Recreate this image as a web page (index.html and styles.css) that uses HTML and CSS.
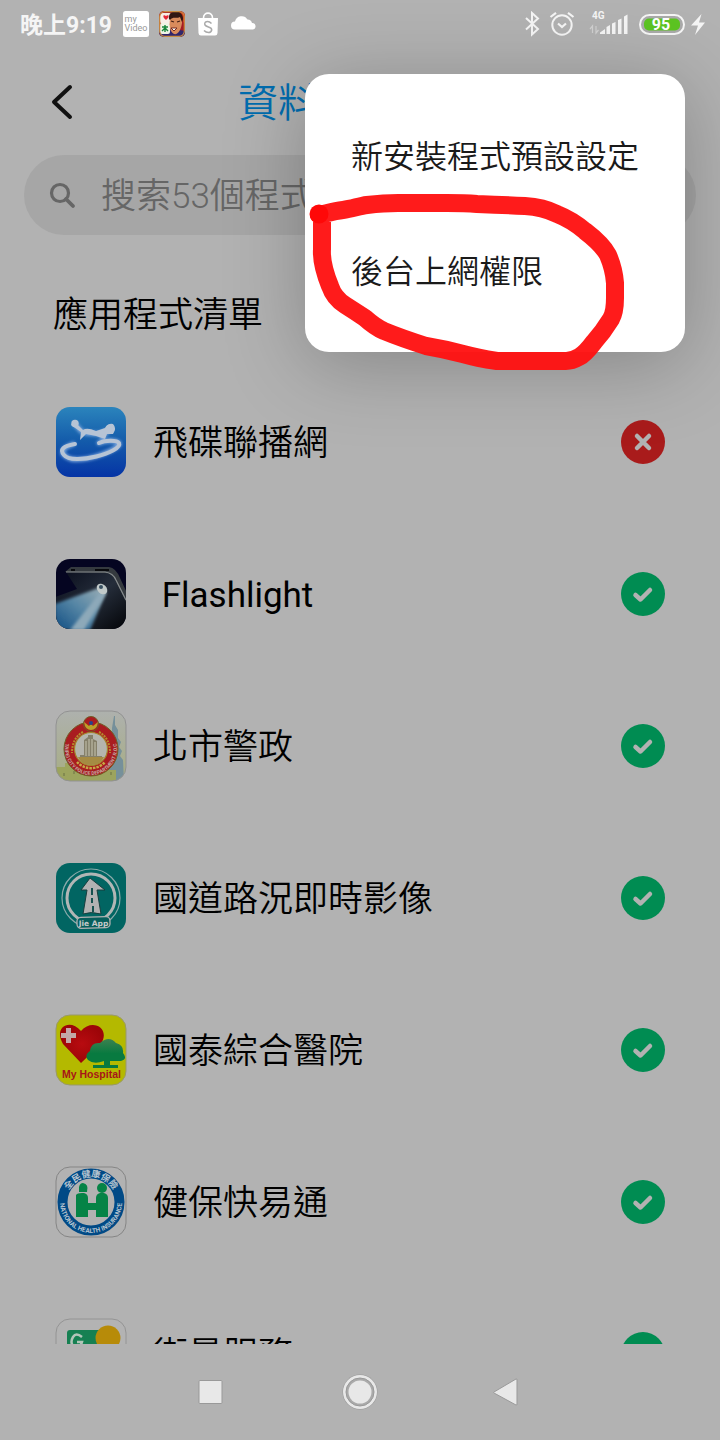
FILE: index.html
```html
<!DOCTYPE html>
<html lang="zh-Hant">
<head>
<meta charset="utf-8">
<meta name="viewport" content="width=device-width, initial-scale=1">
<title>應用程式清單</title>
<link rel="stylesheet" href="styles.css">
</head>
<body>
<svg width="0" height="0" class="sprite" aria-hidden="true">
  <defs>
    <symbol id="allowed" viewBox="0 0 44 44"><circle cx="22" cy="22" r="22" fill="#008c52"/><path d="M14.500 23L19.500 27.500L29 18" fill="none" stroke="#b2b2b2" stroke-width="4.500" stroke-linecap="round" stroke-linejoin="round"/></symbol>
    <symbol id="blocked" viewBox="0 0 44 44"><circle cx="22" cy="22" r="22" fill="#a91b1b"/><path d="M16 16L28 28M28 16L16 28" stroke="#b2b2b2" stroke-width="4.500" stroke-linecap="round"/></symbol>
  </defs>
</svg>
<div class="screen">
  <div class="statusbar">
    <span class="clock">晚上9:19</span>
    <div class="notices">
      <svg width="26" height="26" viewBox="0 0 26 26"><rect width="26" height="26" rx="2.500" fill="#fff"/><text x="1.500" y="11" class="tiny" font-size="9" fill="#999">my</text><text x="1.500" y="20" class="tiny" font-size="9" fill="#999">Video</text></svg>
      <svg width="26" height="26" viewBox="0 0 26 26"><defs><clipPath id="gc"><rect width="26" height="26" rx="5"/></clipPath></defs><g clip-path="url(#gc)"><rect width="26" height="26" fill="#a51c23"/><path d="M0 18L10 17L26 20V26H0Z" fill="#32266b"/><path d="M18 0L26 2V13L22 8Z" fill="#d83a21"/><rect x="1" y="2" width="12" height="11" rx="3" fill="#f6eee7"/><path d="M7 9C3 6 4 3 7 5C10 3 11 6 7 9Z" fill="#e42836"/><rect x="1" y="12" width="10" height="11" rx="2" fill="#eef3e5"/><path d="M3 16H9M6 14V21M3 20L6 17L9 20" stroke="#16863b" stroke-width="1.400" fill="none"/><path d="M11 8C11 1 24 2 23 12C22 19 19 24 15 23C11 21 10 15 11 8Z" fill="#d98b5c"/><path d="M10 8C9 1 15 0 20 1C24 3 25 8 23 11L21 6C17 8 14 5 11 9Z" fill="#321713"/><path d="M12 10L15 11M18 11L21 10" stroke="#432015" stroke-width="1.300"/><path d="M12 17L18 17L15 20Z" fill="#fff" stroke="#752b20"/></g><rect x=".700" y=".700" width="24.600" height="24.600" rx="5" fill="none" stroke="#c88d42" stroke-width="1.200"/></svg>
      <svg width="26" height="26" viewBox="0 0 26 26"><path d="M3 7H23L22.500 22Q22.400 24.500 20 24.500H6Q3.600 24.500 3.500 22Z" fill="#fff"/><path d="M8.500 7C8.500 .500 17.500 .500 17.500 7" fill="none" stroke="#fff" stroke-width="1.600"/><path d="M16.500 12.500C13 9 8.500 11 10 14C11.500 16.500 17.200 15.500 16.700 19C16 22.500 11.500 22 9 19.500" fill="none" stroke="#aaa" stroke-width="1.500"/></svg>
      <svg width="26" height="26" viewBox="0 0 26 26"><path d="M4 18.500A4 4 0 0 1 4 10.500A6.800 6.800 0 0 1 16.500 8.500A4.500 4.500 0 0 1 21 12A3.300 3.300 0 0 1 22 18.500Z" fill="#fff"/></svg>
    </div>
    <div class="signals">
      <svg width="21" height="26" viewBox="0 0 21 26"><path d="M4 7L16 18L10 23.500V2L16 7.500L4 18.500" fill="none" stroke="#f5f5f5" stroke-width="2"/></svg>
      <svg width="34" height="26" viewBox="0 0 34 26"><circle cx="13" cy="14" r="9.700" fill="none" stroke="#f5f5f5" stroke-width="2"/><path d="M1.500 6L7 1.800M19 1.800L24.500 6M9 12.500L13 16L17 12.500" fill="none" stroke="#f5f5f5" stroke-width="2.200"/></svg>
      <svg width="44" height="26" viewBox="0 0 44 26"><text x="3" y="8" class="tiny strong" font-size="10" fill="#f5f5f5">4G</text><path d="M3.500 22V15L1 18M7 15V22L9.500 19" fill="none" stroke="#d1d1d1" stroke-width="1.200"/><path d="M11 23V21.500L16 18V23ZM17.500 23V16L21 14V23ZM23 23V12.500L26.500 11V23ZM29 23V9L32.500 7.500V23ZM35 23V5.500L38.500 3.500V23Z" fill="#f5f5f5"/></svg>
      <svg width="46" height="26" viewBox="0 0 46 26"><rect x="1" y="4" width="44" height="19" rx="9.500" fill="#aaa" stroke="#f5f5f5" stroke-width="2"/><rect x="5" y="7.500" width="36" height="12" rx="5" fill="#5cc422"/><text x="22" y="19" text-anchor="middle" class="tiny strong" font-size="16" fill="#fff">95</text></svg>
      <svg width="16" height="26" viewBox="0 0 16 26"><path d="M10.500 3L0 14.500L7 14.500L4 24L14 11.500L8 11.500Z" fill="#f5f5f5"/></svg>
    </div>
  </div>

  <header class="header">
    <button class="back" aria-label="返回"><svg width="24" height="36" viewBox="0 0 24 36"><path d="M20 3L4 18L20 33" fill="none" stroke="#111" stroke-width="4" stroke-linecap="round" stroke-linejoin="round"/></svg></button>
    <h1 class="title">資料</h1>
  </header>

  <label class="search">
    <svg width="28" height="28" viewBox="0 0 28 28"><circle cx="12" cy="12" r="8.500" fill="none" stroke="#666" stroke-width="3.200"/><path d="M18 18L25 25" stroke="#666" stroke-width="3.800" stroke-linecap="round"/></svg>
    <input type="search" placeholder="搜索53個程式" aria-label="搜索程式">
  </label>

  <h2 class="section">應用程式清單</h2>

  <ul class="apps">
    <li class="app">
      <svg class="logo" viewBox="0 0 72 72"><defs><linearGradient id="sky" x2="0" y2="1"><stop stop-color="#2b84bc"/><stop offset=".5" stop-color="#135aaa"/><stop offset="1" stop-color="#0534a5"/></linearGradient><filter id="glow" x="-.2" y="-.3" width="1.400" height="1.600"><feGaussianBlur stdDeviation="1.800"/></filter></defs><rect x="1" y="1" width="70" height="70" rx="14" fill="url(#sky)"/><g fill="none" stroke="#7da7dd" stroke-width="5" stroke-linecap="round" filter="url(#glow)"><path d="M20 18L26 25L31 27L44 28L54 24L47 31M18 38C7 42 3 48 16 53C34 56 67 42 64 37C60 34 50 34 44 37"/></g><path d="M19 15L28 24Q32 21 41 25L50 22Q53 17 58 18Q62 22 58 28L52 28L50 33L41 30L31 28L25 34L26 26L16 19Z" fill="#b7c4d5"/><circle cx="20" cy="17.500" r="3.700" fill="#b7c4d5"/><circle cx="55" cy="23" r="4.500" fill="#b7c4d5"/><path d="M20 38Q2 41 9 49C18 60 68 46 64 37C62 34 50 34 44 37" fill="none" stroke="#b7c4d5" stroke-width="4" stroke-linecap="round"/></svg>
      <span class="name">飛碟聯播網</span>
      <svg class="state" role="img" aria-label="已禁止"><use href="#blocked"/></svg>
    </li>
    <li class="app">
      <svg class="logo" viewBox="0 0 72 72"><defs><clipPath id="tile"><rect x="1" y="1" width="70" height="70" rx="14"/></clipPath><linearGradient id="phone" x2="1" y2="1"><stop stop-color="#080c1b"/><stop offset=".5" stop-color="#252d3a"/><stop offset="1" stop-color="#020306"/></linearGradient><linearGradient id="beam" x1="1" y1="0" x2="0" y2="1"><stop stop-color="#9eafb5"/><stop offset=".5" stop-color="#5686a5"/><stop offset="1" stop-color="#104d82"/></linearGradient><filter id="soft"><feGaussianBlur stdDeviation="1.800"/></filter></defs><g clip-path="url(#tile)"><rect width="72" height="72" fill="#050521"/><path d="M11 14H54Q61 15 64 25L72 43V72H0V39L22 31Z" fill="url(#phone)"/><path d="M10 14L16 9H54Q61 10 65 20L72 35V46L60 22Q57 15 50 15Z" fill="#353a3f"/><path d="M11 14H50Q58 15 61 22L71 42" fill="none" stroke="#878c8e" stroke-width="1.200"/><path d="M40 12H54M16 12H20" stroke="#08090c" stroke-width="2"/><path d="M46 29L0 46V72H35L51 35Z" fill="url(#beam)" filter="url(#soft)"/><path d="M48 31L15 72H29L51 35Z" fill="#8da9b9" filter="url(#soft)"/><ellipse cx="47" cy="31" rx="4.500" ry="6" fill="#c1c9c9" transform="rotate(-45 47 31)"/><circle cx="46" cy="29" r="2" fill="#385061"/></g></svg>
      <span class="name latin">&nbsp;Flashlight</span>
      <svg class="state" role="img" aria-label="已允許"><use href="#allowed"/></svg>
    </li>
    <li class="app">
      <svg class="logo" viewBox="0 0 72 72"><defs><linearGradient id="mist" x2="0" y2="1"><stop stop-color="#aeb1ae"/><stop offset="1" stop-color="#a7ad82"/></linearGradient></defs><g clip-path="url(#tile)"><rect width="72" height="72" fill="url(#mist)"/><path d="M59 6H60V15L63 20V28L66 32L64 37L67 41L65 46L68 50L69 72H52L55 47L53 41L56 36L54 30L57 26V18Z" fill="#76909a"/><path d="M0 57H10V53H19V59H29V63H47V60H61V72H0Z" fill="#9ca45d"/><path d="M9 63V66M19 61V64M56 62V65" stroke="#6b7045"/></g><circle cx="36" cy="39" r="27" fill="#a91c20" stroke="#735c25"/><circle cx="36" cy="39" r="16.500" fill="#b5b5ad" stroke="#a4852b" stroke-width="1.200"/><path d="M25 49V45H29V30L33 27V25H38V29L42 31V46H47V50Z" fill="#85806a"/><path d="M31 31V46M34 29V46M37 29V46M40 32V46" stroke="#b8b5a0" stroke-width="1.300"/><path d="M23 47H49Q46 55 36 55T23 47Z" fill="#a58b43"/><circle cx="36" cy="14" r="7.500" fill="#a91c20" stroke="#735c25"/><path d="M29 12L34 16L36 14L38 16L43 12Q42 20 36 20T29 12Z" fill="#bba028"/><circle cx="36" cy="13" r="2" fill="#26448b"/><path d="M28 22Q17 28 17 43M44 22Q55 28 55 43" fill="none" stroke="#b58e2b" stroke-width="2" stroke-dasharray="2 1"/><path id="policeArc" d="M13.500 26A26 26 0 1 0 58.500 26" fill="none"/><text font-size="5" class="tiny strong" fill="#c4a8a0"><textPath href="#policeArc" startOffset="50%" text-anchor="middle">TAIPEI CITY POLICE DEPARTMENT R.O.C</textPath></text><path d="M22 52A19 19 0 0 0 50 52" fill="none" stroke="#c5aa45" stroke-width="2.500" stroke-dasharray="2.500 1"/><rect x="1" y="1" width="70" height="70" rx="14" fill="none" stroke="#929292"/></svg>
      <span class="name">北市警政</span>
      <svg class="state" role="img" aria-label="已允許"><use href="#allowed"/></svg>
    </li>
    <li class="app">
      <svg class="logo" viewBox="0 0 72 72"><rect x="1" y="1" width="70" height="70" rx="14" fill="#016562"/><circle cx="36" cy="36" r="29" fill="none" stroke="#8cabab" stroke-width="1.200"/><circle cx="36" cy="36" r="24" fill="none" stroke="#b1b6b5" stroke-width="3"/><path d="M35 16L50 28H42L46 52Q36 49 28 52L32 28H26Z" fill="#b2b2b2" stroke="#183f3e"/><path d="M37 26V33M37 36V41M38 44V50" stroke="#16514f" stroke-width="2"/><rect x="22" y="55" width="33" height="11" rx="4" fill="#075f5c" stroke="#b2b2b2" stroke-width="1.300" transform="rotate(-2 38 61)"/><text x="38.500" y="63.500" text-anchor="middle" font-size="7.500" class="tiny strong wide" fill="#c5caca">Jie App</text></svg>
      <span class="name">國道路況即時影像</span>
      <svg class="state" role="img" aria-label="已允許"><use href="#allowed"/></svg>
    </li>
    <li class="app">
      <svg class="logo" viewBox="0 0 72 72"><defs><radialGradient id="heart"><stop stop-color="#b80b10"/><stop offset="1" stop-color="#9d0508"/></radialGradient><linearGradient id="leaf" x2="0" y2="1"><stop stop-color="#3c8150"/><stop offset=".5" stop-color="#087a40"/></linearGradient></defs><rect x="1" y="1" width="70" height="70" rx="14" fill="#b4b900" stroke="#999969"/><path d="M26 49L8 30C-2 13 15 4 26 17C37 4 56 14 46 30Z" fill="url(#heart)"/><path d="M11 14H16V19H21V24H16V29H11V24H6V19H11Z" fill="#c2a8a8"/><path d="M33 46Q29 41 35 37Q36 28 45 29Q54 21 61 29Q69 31 68 39Q73 45 66 47H55V51H63V54H38V51H49V47Q39 51 33 46Z" fill="url(#leaf)"/><text x="36.500" y="64" text-anchor="middle" font-size="10.500" class="tiny strong hospital" fill="#a71419">My Hospital</text></svg>
      <span class="name">國泰綜合醫院</span>
      <svg class="state" role="img" aria-label="已允許"><use href="#allowed"/></svg>
    </li>
    <li class="app">
      <svg class="logo" viewBox="0 0 72 72"><rect x="1" y="1" width="70" height="70" rx="14" fill="#b2b2b2" stroke="#858585"/><circle cx="36" cy="36" r="28.500" fill="none" stroke="#014a86" stroke-width="10"/><path d="M21 51V29Q22 27 27 27H29Q33 28 33 32V37H41V32Q41 28 45 27H49Q53 28 53 32V51H41V44H33V51Z" fill="#058346"/><path d="M24 26V21Q25 17 28 17Q34 18 32 26Z" fill="#058346"/><circle cx="47" cy="22" r="5" fill="#058346"/><path id="healthTop" d="M11 36A25 25 0 0 1 61 36" fill="none"/><text font-size="9" class="tiny strong" fill="#b8c5d0"><textPath href="#healthTop" startOffset="50%" text-anchor="middle">全民健康保險</textPath></text><path id="healthBottom" d="M5 36A31 31 0 0 0 67 36" fill="none"/><text font-size="6.500" class="tiny strong" fill="#b8c5d0"><textPath href="#healthBottom" startOffset="50%" text-anchor="middle">NATIONAL HEALTH INSURANCE</textPath></text></svg>
      <span class="name">健保快易通</span>
      <svg class="state" role="img" aria-label="已允許"><use href="#allowed"/></svg>
    </li>
    <li class="app">
      <svg class="logo" viewBox="0 0 72 72"><rect x="1" y="1" width="70" height="70" rx="14" fill="#b3b3b3" stroke="#949494"/><rect x="12" y="12" width="42" height="48" rx="3" fill="#168052"/><circle cx="53" cy="20" r="12.500" fill="#b78b09"/><path d="M27 19Q21 14 18 19Q15 24 18 28Q25 31 27 24H22" fill="none" stroke="#b2c5b9" stroke-width="2.500"/></svg>
      <span class="name">街景服務</span>
      <svg class="state" role="img" aria-label="已允許"><use href="#allowed"/></svg>
    </li>
  </ul>

  <nav class="navbar">
    <button aria-label="最近使用"><svg width="40" height="40" viewBox="0 0 40 40"><rect x="8" y="8.500" width="23" height="23" rx="1" fill="#e8e8e8" stroke="#999"/></svg></button>
    <button aria-label="主畫面"><svg width="40" height="40" viewBox="0 0 40 40"><circle cx="20" cy="20" r="17.500" fill="#999"/><circle cx="20" cy="20" r="17" fill="#e8e8e8"/><circle cx="20" cy="20" r="14" fill="#aaa" stroke="#999"/><circle cx="20" cy="20" r="11.500" fill="#e8e8e8"/></svg></button>
    <button aria-label="返回"><svg width="40" height="40" viewBox="0 0 40 40"><path d="M5 20L27 7Q28 6.500 28 8V32Q28 33.500 27 33L5 21Q4 20.500 5 20Z" fill="#e8e8e8" stroke="#999"/></svg></button>
  </nav>

  <div class="menu" role="menu">
    <button class="menu-item" role="menuitem">新安裝程式預設設定</button>
    <button class="menu-item" role="menuitem">後台上網權限</button>
    <svg class="marker" width="320" height="184" viewBox="308 190 320 184" aria-hidden="true"><path d="M319 215C328 213 334 211 343 210C352 209 359 206 367 205Q384 203 398 203H447Q465 203 477 204Q505 205 525 206Q543 207 557 214Q572 220 585 231Q602 244 608 255Q614 269 615 283V298Q615 312 611 319Q603 332 594 342Q585 354 579 357Q572 361 566 361H497Q477 358 463 354Q444 349 426 346Q401 338 384 331Q375 327 365 318Q356 312 345 305Q334 298 330 286Q321 264 322 249V220" fill="none" stroke="#ff1212" stroke-opacity=".96" stroke-width="18" stroke-linecap="round" stroke-linejoin="round"/><circle cx="319" cy="214" r="9.500" fill="#ff0808"/></svg>
  </div>
</div>
</body>
</html>
```
FILE: styles.css
```css
* { box-sizing: border-box; }
body {
  margin: 0;
  background: #b2b2b2;
  color: #000;
  font-family: Roboto, "Noto Sans CJK TC", sans-serif;
}
button {
  padding: 0;
  border: 0;
  background: none;
  color: inherit;
  font: inherit;
}
svg { display: block; flex: none; }
.sprite { position: absolute; }
.tiny { font-family: Roboto, "Noto Sans CJK TC", sans-serif; }
.strong { font-weight: 700; }
.wide { font-family: "DejaVu Sans", sans-serif; }
.hospital { font-family: "Liberation Sans", sans-serif; }

.screen {
  position: relative;
  display: flex;
  flex-direction: column;
  height: 100vh;
  overflow: hidden;
}
.statusbar {
  display: flex;
  align-items: center;
  flex: none;
  height: 48px;
  padding: 0 13px 0 20px;
}
.clock {
  padding-top: 3px;
  margin-right: 11px;
  color: #f5f5f5;
  font-size: 23px;
  font-weight: 700;
  line-height: 24px;
}
.notices { display: flex; gap: 10px; }
.signals { display: flex; gap: 6px; margin-left: auto; }

.header {
  display: flex;
  align-items: center;
  flex: none;
  height: 107px;
  padding: 0 50px;
}
.back { width: 188px; }
.title {
  margin: 0;
  padding-top: 4px;
  color: #006cae;
  font-size: 40px;
  font-weight: 350;
  line-height: 48px;
}
.search {
  display: flex;
  align-items: center;
  gap: 25px;
  flex: none;
  height: 80px;
  margin: 0 24px;
  padding: 0 24px;
  border-radius: 40px;
  background: #a6a6a6;
}
.search input {
  flex: 1;
  min-width: 0;
  padding: 4px 0 0;
  border: 0;
  outline: 0;
  background: none;
  font: inherit;
  font-size: 35px;
  font-weight: 350;
  line-height: 48px;
}
.search input::placeholder { color: #666; opacity: 1; }
.section {
  flex: none;
  margin: 0;
  padding: 57px 53px 26px;
  font-size: 35px;
  font-weight: 350;
  line-height: 48px;
}
.apps {
  flex: 1;
  min-height: 0;
  margin: 0;
  padding: 0;
  overflow: hidden;
  list-style: none;
}
.app {
  display: flex;
  align-items: center;
  gap: 26px;
  height: 152px;
  padding: 0 55px;
}
.logo { width: 72px; height: 72px; }
.name {
  flex: 1;
  padding-top: 4px;
  font-size: 35px;
  font-weight: 350;
  line-height: 48px;
}
.latin { font-weight: 400; }
.state { width: 44px; height: 44px; }

.navbar {
  display: flex;
  justify-content: center;
  gap: 109px;
  align-items: center;
  flex: none;
  height: 96px;
}

.menu {
  position: absolute;
  top: 74px;
  right: 35px;
  width: 380px;
  padding: 25px 0 23px;
  border-radius: 24px;
  background: #fff;
  color: #1a1a1a;
  box-shadow: 0 12px 80px rgba(0, 0, 0, 0.25);
}
.menu-item {
  display: block;
  width: 100%;
  height: 115px;
  padding: 0 46px;
  font-size: 32px;
  font-weight: 350;
  line-height: 48px;
  text-align: left;
}
.marker {
  position: absolute;
  top: 116px;
  left: 3px;
  pointer-events: none;
}
```
